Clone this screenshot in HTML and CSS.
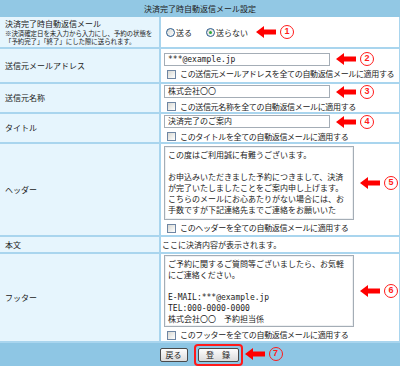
FILE: index.html
```html
<!DOCTYPE html>
<html lang="ja">
<head>
<meta charset="utf-8">
<link rel="stylesheet" href="styles.css">
</head>
<body>
<div class="page">
  <div class="title">決済完了時自動返信メール設定</div>
  <div class="form">
    <div class="lbl">
      <div>決済完了時自動返信メール</div>
      <div class="note">※決済確定日を未入力から入力にし、予約の状態を<br>「予約完了」「終了」にした際に送られます。</div>
    </div>
    <div class="val">
      <div class="line">
        <label class="opt"><span class="radio"></span>送る</label>
        <label class="opt opt2"><span class="radio on"></span>送らない</label>
        <span class="annot a1"><svg class="arrow" viewBox="0 0 20 12"><path d="M0 6 L8 0 L8 3.5 L20 3.5 L20 8.5 L8 8.5 L8 12 Z"/></svg><span class="num">1</span></span>
      </div>
    </div>

    <div class="lbl">送信元メールアドレス</div>
    <div class="val">
      <div class="line">
        <div class="input">***@example.jp</div>
        <span class="annot"><svg class="arrow" viewBox="0 0 20 12"><path d="M0 6 L8 0 L8 3.5 L20 3.5 L20 8.5 L8 8.5 L8 12 Z"/></svg><span class="num">2</span></span>
      </div>
      <label class="cb"><span class="box"></span>この送信元メールアドレスを全ての自動返信メールに適用する</label>
    </div>

    <div class="lbl">送信元名称</div>
    <div class="val">
      <div class="line">
        <div class="input">株式会社〇〇</div>
        <span class="annot"><svg class="arrow" viewBox="0 0 20 12"><path d="M0 6 L8 0 L8 3.5 L20 3.5 L20 8.5 L8 8.5 L8 12 Z"/></svg><span class="num">3</span></span>
      </div>
      <label class="cb"><span class="box"></span>この送信元名称を全ての自動返信メールに適用する</label>
    </div>

    <div class="lbl">タイトル</div>
    <div class="val">
      <div class="line">
        <div class="input">決済完了のご案内</div>
        <span class="annot"><svg class="arrow" viewBox="0 0 20 12"><path d="M0 6 L8 0 L8 3.5 L20 3.5 L20 8.5 L8 8.5 L8 12 Z"/></svg><span class="num">4</span></span>
      </div>
      <label class="cb"><span class="box"></span>このタイトルを全ての自動返信メールに適用する</label>
    </div>

    <div class="lbl">ヘッダー</div>
    <div class="val">
      <div class="line">
        <div class="textarea ta1">この度はご利用誠に有難うございます。<br><br>お申込みいただきました予約につきまして、決済<br>が完了いたしましたことをご案内申し上げます。<br>こちらのメールにお心あたりがない場合には、お<br>手数ですが下記連絡先までご連絡をお願いいた</div>
        <span class="annot"><svg class="arrow" viewBox="0 0 20 12"><path d="M0 6 L8 0 L8 3.5 L20 3.5 L20 8.5 L8 8.5 L8 12 Z"/></svg><span class="num">5</span></span>
      </div>
      <label class="cb"><span class="box"></span>このヘッダーを全ての自動返信メールに適用する</label>
    </div>

    <div class="lbl">本文</div>
    <div class="val plain">ここに決済内容が表示されます。</div>

    <div class="lbl">フッター</div>
    <div class="val">
      <div class="line">
        <div class="textarea ta2">ご予約に関するご質問等ございましたら、お気軽<br>にご連絡ください。<br><br>E-MAIL:***@example.jp<br>TEL:000-0000-0000<br>株式会社〇〇　予約担当係</div>
        <span class="annot"><svg class="arrow" viewBox="0 0 20 12"><path d="M0 6 L8 0 L8 3.5 L20 3.5 L20 8.5 L8 8.5 L8 12 Z"/></svg><span class="num">6</span></span>
      </div>
      <label class="cb"><span class="box"></span>このフッターを全ての自動返信メールに適用する</label>
    </div>
  </div>
  <div class="bar">
    <span class="btn back">戻る</span>
    <span class="submit-wrap">
      <span class="btn submit">登　録</span>
      <span class="annot a7"><svg class="arrow" viewBox="0 0 20 12"><path d="M0 6 L8 0 L8 3.5 L20 3.5 L20 8.5 L8 8.5 L8 12 Z"/></svg><span class="num">7</span></span>
    </span>
  </div>
</div>
</body>
</html>
```

FILE: styles.css
```css
* { box-sizing: border-box; }
html, body { margin: 0; padding: 0; background: #fff; }
body {
  font-family: "Noto Sans CJK JP", "Liberation Sans", sans-serif;
  font-size: 8px;
  color: #222;
  width: 400px;
  height: 366px;
  overflow: hidden;
}
.page { width: 400px; }
.title {
  height: 17px;
  line-height: 17px;
  background: #92c8e4;
  text-align: center;
  color: #222;
}
.form {
  display: grid;
  grid-template-columns: 159px 1fr;
  grid-template-rows: 30px 33px 28px 28px 91px 15px 87px;
  gap: 2px;
  background: #a9d5ee;
  padding: 0 1px 2px 0;
}
.lbl {
  background: #e6f5fd;
  padding-left: 5px;
  display: flex;
  flex-direction: column;
  justify-content: center;
  line-height: 10px;
}
.note {
  font-size: 6.5px;
  line-height: 8.5px;
  margin-top: 0;
  letter-spacing: -0.1px;
}
.val {
  background: #fff;
  padding-left: 2px;
  display: flex;
  flex-direction: column;
  justify-content: center;
  gap: 3px;
}
.val.plain { padding-left: 1px; line-height: 10px; }
.line {
  display: flex;
  align-items: center;
}
.opt {
  display: flex;
  align-items: center;
  gap: 1px;
  margin-left: 3px;
}
.opt2 { margin-left: 14px; }
.radio {
  width: 9px;
  height: 9px;
  border: 1px solid #2a5a8c;
  border-radius: 50%;
  background: linear-gradient(135deg, #d8d8d2, #fff);
  position: relative;
  display: inline-block;
}
.radio.on::after {
  content: "";
  position: absolute;
  left: 2px;
  top: 2px;
  width: 3px;
  height: 3px;
  border-radius: 50%;
  background: #2fa83a;
}
.annot {
  display: flex;
  align-items: center;
  margin-left: 6px;
}
.a1 { margin-left: 8px; }
.arrow {
  width: 20px;
  height: 12px;
  fill: #ff0000;
  display: block;
}
.num {
  width: 14px;
  height: 14px;
  margin-left: 4px;
  border: 1.6px solid #ff1a1a;
  border-radius: 50%;
  color: #ff1a1a;
  font-family: "Liberation Sans", sans-serif;
  font-weight: bold;
  font-size: 9px;
  line-height: 11px;
  text-align: center;
}
.input {
  width: 166px;
  height: 13px;
  border: 1px solid #a4adb6;
  padding: 0 3px;
  font-family: "DejaVu Sans Mono", "Noto Sans CJK JP", monospace;
  font-size: 8px;
  line-height: 11px;
  white-space: nowrap;
  overflow: hidden;
  margin-left: 1px;
}
.textarea {
  width: 190px;
  border: 1px solid #a4adb6;
  padding: 3px 3px;
  font-family: "DejaVu Sans Mono", "Noto Sans CJK JP", monospace;
  font-size: 8px;
  line-height: 11px;
  white-space: nowrap;
  overflow: hidden;
  margin-left: 1px;
  box-shadow: inset 0 0 0 1px #eef0f2;
}
.ta1 { height: 74px; }
.ta2 { height: 72px; }
.cb {
  display: flex;
  align-items: center;
  gap: 4px;
  margin-left: 4px;
  letter-spacing: -0.35px;
  line-height: 10px;
}
.box {
  width: 9px;
  height: 9px;
  border: 1px solid #6f86a3;
  background: linear-gradient(135deg, #d8d8d2, #fff);
  display: inline-block;
}
.bar {
  height: 23px;
  background: #8ec6e4;
  display: flex;
  align-items: center;
  justify-content: center;
  gap: 10px;
  padding-right: 2px;
}
.btn {
  display: inline-block;
  height: 14px;
  line-height: 12px;
  font-size: 8px;
  border: 1px solid #4a4a4a;
  border-radius: 2px;
  background: linear-gradient(#fdfdfd, #dcdcdc);
  text-align: center;
}
.back { width: 28px; }
.submit { width: 41px; }
.submit-wrap {
  position: relative;
  display: inline-block;
  height: 14px;
}
.submit-wrap::before {
  content: "";
  position: absolute;
  left: -4px;
  top: -4px;
  right: -4px;
  bottom: -4px;
  border: 2px solid #ff1a1a;
  border-radius: 4px;
}
.a7 {
  position: absolute;
  left: 47px;
  top: -1px;
  margin-left: 0;
}
```
